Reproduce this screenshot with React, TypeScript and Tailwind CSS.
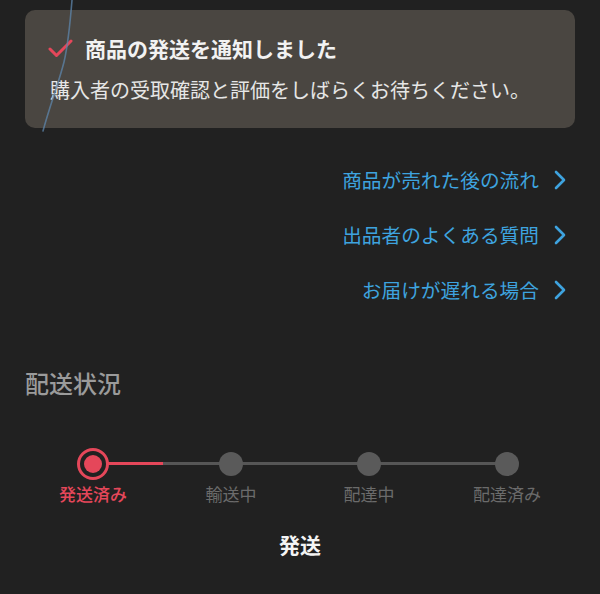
const font = { fontFamily: '"Noto Sans CJK JP", "Noto Sans", sans-serif' };

const links = ["商品が売れた後の流れ", "出品者のよくある質問", "お届けが遅れる場合"];
const steps = ["発送済み", "輸送中", "配達中", "配達済み"];

function Check() {
  return (
    <svg width="25" height="19" viewBox="0 0 25 19" fill="none">
      <path
        d="M2 10 L8.5 16.5 L23 2"
        stroke="#e5475a"
        strokeWidth="3"
        strokeLinecap="round"
        strokeLinejoin="round"
      />
    </svg>
  );
}

function Chevron() {
  return (
    <svg width="14" height="22" viewBox="0 0 14 22" fill="none" className="ml-[14px]">
      <path
        d="M3 3 L11 11 L3 19"
        stroke="currentColor"
        strokeWidth="2.6"
        strokeLinecap="round"
        strokeLinejoin="round"
      />
    </svg>
  );
}

export default function App() {
  return (
    <div
      className="relative w-[600px] h-[594px] overflow-hidden bg-[#212121] text-white"
      style={font}
    >
      <div className="px-[25px] pt-[10px]">
        <div className="h-[118px] rounded-[10px] bg-[#4a4641] pl-[23px] pr-[25px] pt-[24px]">
          <div className="flex items-center gap-[12px] h-[28px]">
            <Check />
            <span className="text-[21px] font-bold text-[#f2f2f2] leading-none">
              商品の発送を通知しました
            </span>
          </div>
          <p className="mt-[18px] pl-[2px] text-[20px] leading-none text-[#e6e6e6]">
            購入者の受取確認と評価をしばらくお待ちください。
          </p>
        </div>
      </div>

      <div className="mt-[39px] flex flex-col items-end pr-[33px] gap-[29px]">
        {links.map((l) => (
          <div key={l} className="flex items-center h-[26px] text-[#3ea3df]">
            <span className="text-[19.7px] leading-none">{l}</span>
            <Chevron />
          </div>
        ))}
      </div>

      <h2 className="mt-[68px] pl-[25px] text-[24px] font-medium text-[#9b9b9b] leading-none">
        配送状況
      </h2>

      <div className="mt-[50px] px-[24px]">
        <div className="relative grid grid-cols-4">
          <div className="absolute left-[12.5%] right-[12.5%] top-[17px] h-[3px] bg-[#565656]" />
          <div className="absolute left-[12.5%] w-[70px] top-[17px] h-[3px] bg-[#e5475a]" />
          {steps.map((s, i) => (
            <div key={s} className="relative flex flex-col items-center">
              <div className="h-[37px] flex items-center justify-center">
                {i === 0 ? (
                  <div className="w-[32px] h-[32px] rounded-full border-[3px] border-[#e5475a] bg-[#212121] flex items-center justify-center">
                    <div className="w-[18px] h-[18px] rounded-full bg-[#e5475a]" />
                  </div>
                ) : (
                  <div className="w-[24px] h-[24px] rounded-full bg-[#5a5a5a]" />
                )}
              </div>
              <span
                className={
                  "mt-[3px] text-[17px] leading-none " +
                  (i === 0 ? "text-[#e5475a] font-medium" : "text-[#6b6b6b]")
                }
              >
                {s}
              </span>
            </div>
          ))}
        </div>
      </div>

      <div className="mt-[32px] text-center text-[21px] font-bold text-[#f4f4f4] leading-none">
        発送
      </div>

      <svg
        className="absolute left-0 top-0 pointer-events-none"
        width="600"
        height="594"
        viewBox="0 0 600 594"
      >
        <path
          d="M72 0 C70 25 68 45 64 62 C59 82 50 105 43 131"
          stroke="#5d86ab"
          strokeOpacity="0.75"
          strokeWidth="1.6"
          fill="none"
          strokeLinecap="round"
        />
      </svg>
    </div>
  );
}
